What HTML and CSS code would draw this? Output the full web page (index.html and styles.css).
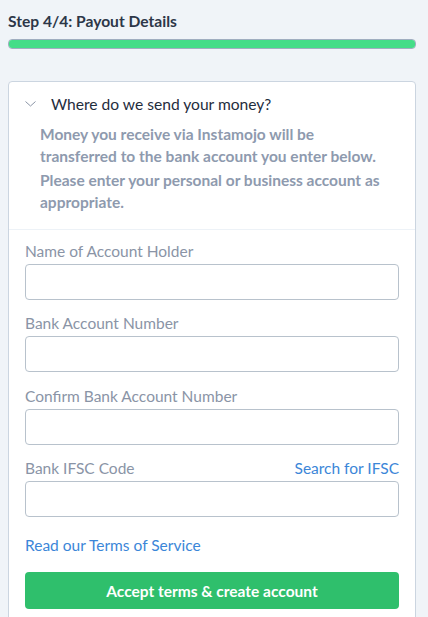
FILE: index.html
```html
<!DOCTYPE html>
<html lang="en">
<head>
<meta charset="utf-8">
<title>Payout Details</title>
<link rel="stylesheet" href="styles.css">
</head>
<body>
<div class="page">
  <h1 class="step-title">Step 4/4: Payout Details</h1>
  <div class="progress"><div class="progress-fill"></div></div>

  <div class="card">
    <div class="card-head">
      <div class="head-row">
        <svg class="chevron" width="11" height="6" viewBox="0 0 11 6"><path d="M0.5 0.5 L5.5 5 L10.5 0.5" fill="none" stroke="#8a94a6" stroke-width="1"/></svg>
        <span class="head-title">Where do we send your money?</span>
      </div>
      <p class="info">Money you receive via Instamojo will be transferred to the bank account you enter below.</p>
      <p class="info">Please enter your personal or business account as appropriate.</p>
    </div>
    <form class="card-body">
      <div class="field">
        <label class="label">Name of Account Holder</label>
        <input class="input" type="text">
      </div>
      <div class="field">
        <label class="label">Bank Account Number</label>
        <input class="input" type="text">
      </div>
      <div class="field">
        <label class="label">Confirm Bank Account Number</label>
        <input class="input" type="text">
      </div>
      <div class="field">
        <div class="label-row">
          <label class="label">Bank IFSC Code</label>
          <a class="link" href="#">Search for IFSC</a>
        </div>
        <input class="input" type="text">
      </div>
      <a class="link terms" href="#">Read our Terms of Service</a>
      <button class="btn" type="button">Accept terms &amp; create account</button>
    </form>
  </div>
</div>
</body>
</html>
```

FILE: styles.css
```css
html, body {
  margin: 0;
  padding: 0;
  background: #f0f4f8;
  font-family: Lato, "Open Sans", sans-serif;
  color: #2d3748;
}
.page {
  padding: 0 12px 0 8px;
}
.step-title {
  margin: 0;
  padding-top: 11px;
  font-size: 15.6px;
  line-height: 20px;
  font-weight: 700;
  color: #2d3748;
}
.progress {
  margin-top: 8px;
  height: 8px;
  border: 1px solid #a0aec0;
  border-radius: 4px;
  background: #e2e8f0;
  overflow: hidden;
}
.progress-fill {
  height: 100%;
  width: 100%;
  background: #44dd88;
}
.card {
  margin-top: 32px;
  background: #fff;
  border: 1px solid #cbd5e0;
  border-radius: 4px;
}
.card-head {
  padding: 11px 16px 16px 16px;
  border-bottom: 1px solid #edf2f7;
}
.head-row {
  display: flex;
  align-items: center;
  height: 22px;
}
.chevron {
  margin-left: 0;
  margin-right: 15px;
}
.head-title {
  font-size: 15.6px;
  color: #1f2d3d;
}
.info {
  margin: 8px 10px 0 15px;
  font-size: 15.5px;
  line-height: 22px;
  color: #8e9aae;
  font-weight: 700;
}
.info + .info {
  margin-top: 2px;
}
.card-body {
  padding: 11px 16px 20px 16px;
  display: flex;
  flex-direction: column;
}
.field {
  display: flex;
  flex-direction: column;
  margin-bottom: 13.33px;
}
.label-row {
  display: flex;
  justify-content: space-between;
  align-items: center;
}
.label {
  font-size: 15.5px;
  line-height: 20px;
  color: #8a94a6;
  margin-bottom: 3px;
}
.input {
  box-sizing: border-box;
  height: 36px;
  border: 1px solid #b8c2cc;
  border-radius: 4px;
  background: #fff;
  font: inherit;
  margin: 0;
}
.link {
  font-size: 15.5px;
  line-height: 20px;
  color: #3b86d8;
  text-decoration: none;
  margin-bottom: 3px;
}
.terms {
  margin-top: 5px;
  margin-bottom: 0;
  align-self: flex-start;
}
.btn {
  margin-top: 17px;
  height: 37px;
  border: none;
  border-radius: 4px;
  background: #2fbf6c;
  color: #fff;
  font-family: inherit;
  font-size: 15.5px;
  font-weight: 700;
  cursor: pointer;
}
```
